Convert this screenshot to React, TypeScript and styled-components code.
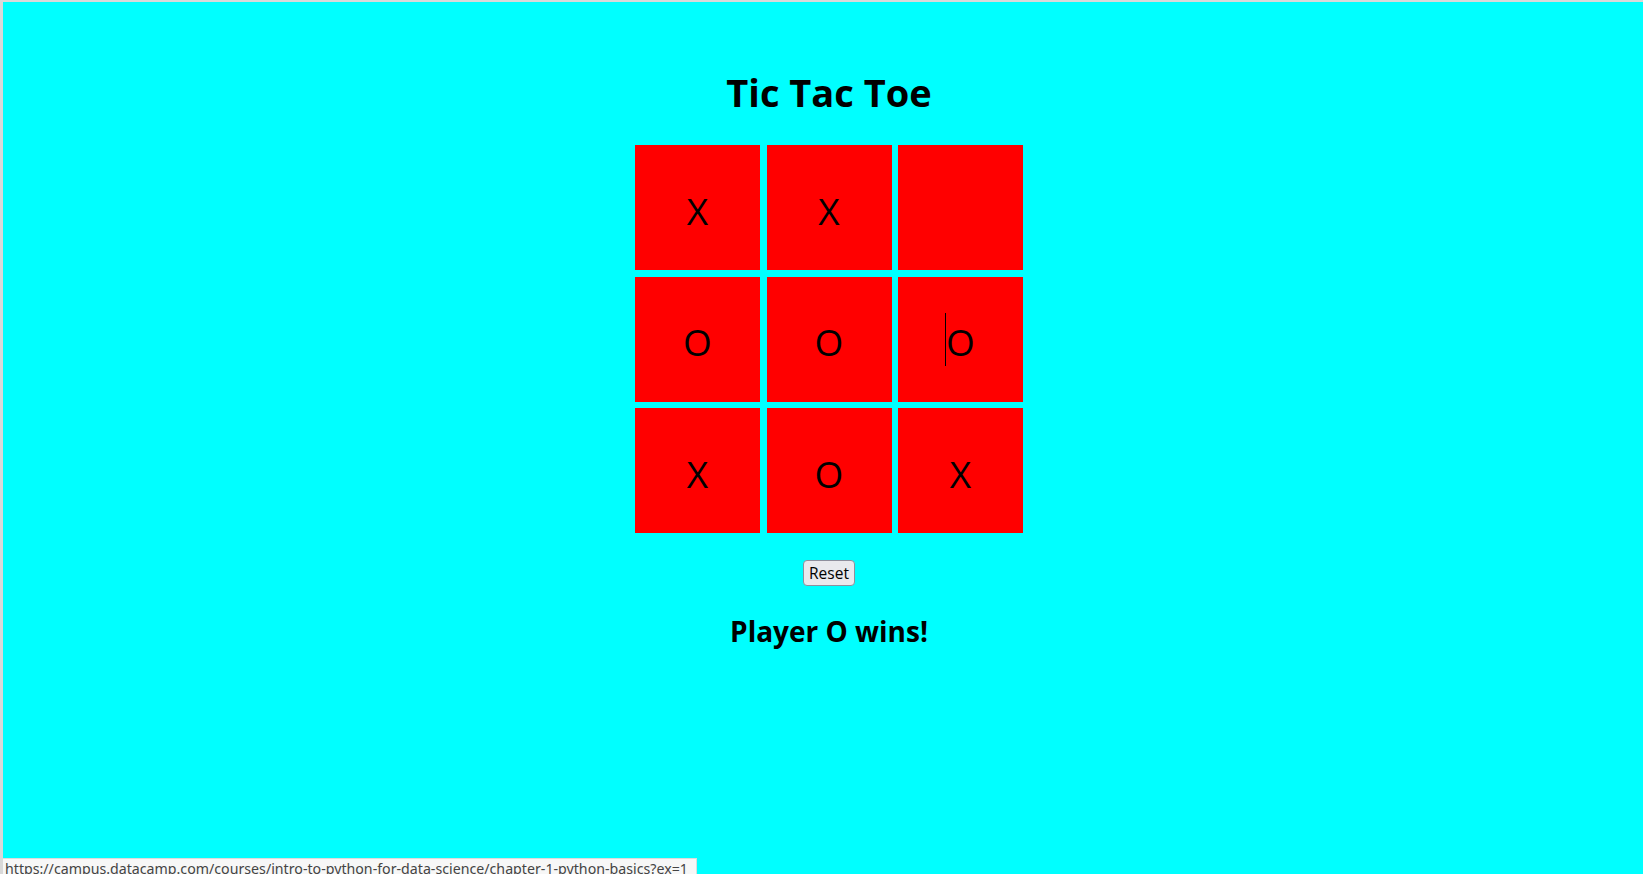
import React, { useState } from 'react'
import styled, { createGlobalStyle } from 'styled-components'

const GlobalStyle = createGlobalStyle`
  html, body {
    margin: 0;
    padding: 0;
    height: 100%;
    background: #d9d9d9;
  }
  #root {
    height: 100%;
  }
`

type Mark = 'X' | 'O' | null

const initialBoard: Mark[] = ['X', 'X', null, 'O', 'O', 'O', 'X', 'O', 'X']

function App() {
  const [board, setBoard] = useState<Mark[]>(initialBoard)
  const [status, setStatus] = useState('Player O wins!')

  function onReset() {
    setBoard(Array(9).fill(null))
    setStatus('')
  }

  return (
    <>
      <GlobalStyle />
      <Frame>
        <Game>
          <Title>Tic Tac Toe</Title>
          <Board>
            {board.map((mark, i) => (
              <Cell key={i}>
                {i === 5 && <Caret />}
                {mark}
              </Cell>
            ))}
          </Board>
          <ResetButton onClick={onReset}>Reset</ResetButton>
          <Status>{status}</Status>
        </Game>
        <LinkPreview>
          https://campus.datacamp.com/courses/intro-to-python-for-data-science/chapter-1-python-basics?ex=1
        </LinkPreview>
      </Frame>
    </>
  )
}

const Frame = styled.div`
  position: relative;
  box-sizing: border-box;
  height: 100%;
  margin: 2px 0 0 3px;
  background: #00ffff;
  padding-left: 12px;
  overflow: hidden;
  font-family: 'Open Sans', 'Noto Sans', sans-serif;
`

const Game = styled.div`
  display: flex;
  flex-direction: column;
  align-items: center;
  padding-top: 65px;
`

const Title = styled.h1`
  margin: 0;
  font-size: 38px;
  line-height: 50px;
  font-weight: 700;
  color: #000;
`

const Board = styled.div`
  display: grid;
  grid-template-columns: repeat(3, 125px);
  grid-auto-rows: 125px;
  gap: 6.5px;
  margin-top: 28px;
`

const Cell = styled.div`
  position: relative;
  display: flex;
  align-items: center;
  justify-content: center;
  background: #ff0000;
  color: #000;
  font-size: 37px;
  padding-top: 5px;
  box-sizing: border-box;
`

const Caret = styled.span`
  position: absolute;
  left: 47px;
  top: 36px;
  width: 1px;
  height: 53px;
  background: #000;
`

const ResetButton = styled.button`
  margin-top: 27px;
  height: 26px;
  padding: 0 5px;
  font-family: 'Open Sans', 'Noto Sans', sans-serif;
  font-size: 15.5px;
  color: #000;
  background: #e9e9ed;
  border: 1px solid #8f8f9d;
  border-radius: 4px;
  cursor: pointer;
`

const Status = styled.h2`
  margin: 25px 0 0;
  font-size: 28px;
  line-height: 40px;
  font-weight: 700;
  color: #000;
`

const LinkPreview = styled.div`
  position: absolute;
  left: -3px;
  bottom: 0;
  height: 18px;
  padding: 0 8px 0 4px;
  box-sizing: border-box;
  background: #f7f7f7;
  border: 1px solid #dcdcdc;
  border-bottom: none;
  color: #444;
  font-family: 'Noto Sans', 'Open Sans', sans-serif;
  font-size: 14.2px;
  line-height: 19px;
  white-space: nowrap;
  overflow: hidden;
`

export default App
